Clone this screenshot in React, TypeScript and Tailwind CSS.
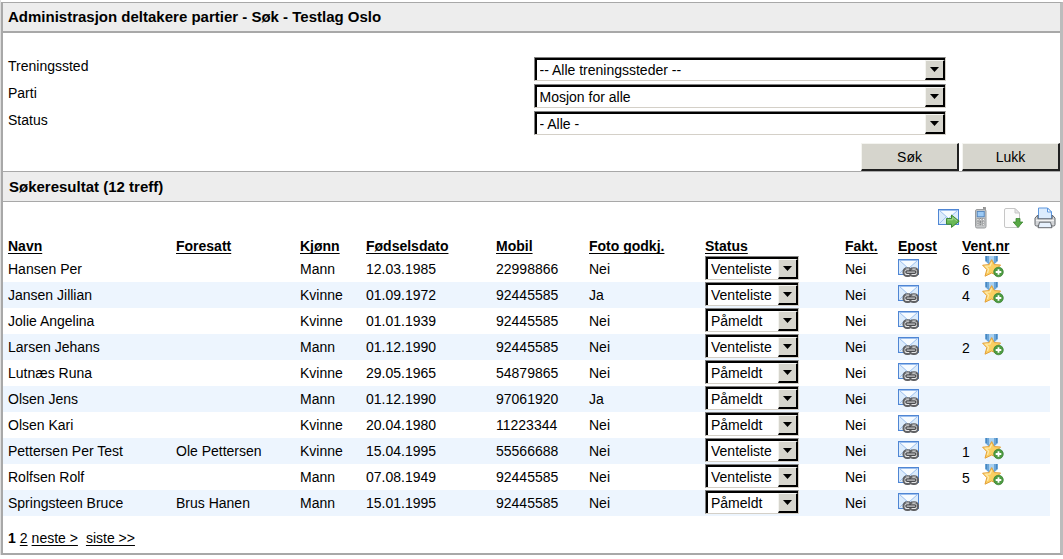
import { useId, type ReactNode } from 'react';

type Row = {
  navn: string;
  foresatt?: string;
  kjonn: string;
  fodt: string;
  mobil: string;
  foto: string;
  status: string;
  vent?: number;
};

const rows: Row[] = [
  { navn: 'Hansen Per', kjonn: 'Mann', fodt: '12.03.1985', mobil: '22998866', foto: 'Nei', status: 'Venteliste', vent: 6 },
  { navn: 'Jansen Jillian', kjonn: 'Kvinne', fodt: '01.09.1972', mobil: '92445585', foto: 'Ja', status: 'Venteliste', vent: 4 },
  { navn: 'Jolie Angelina', kjonn: 'Kvinne', fodt: '01.01.1939', mobil: '92445585', foto: 'Nei', status: 'Påmeldt' },
  { navn: 'Larsen Jehans', kjonn: 'Mann', fodt: '01.12.1990', mobil: '92445585', foto: 'Nei', status: 'Venteliste', vent: 2 },
  { navn: 'Lutnæs Runa', kjonn: 'Kvinne', fodt: '29.05.1965', mobil: '54879865', foto: 'Nei', status: 'Påmeldt' },
  { navn: 'Olsen Jens', kjonn: 'Mann', fodt: '01.12.1990', mobil: '97061920', foto: 'Ja', status: 'Påmeldt' },
  { navn: 'Olsen Kari', kjonn: 'Kvinne', fodt: '20.04.1980', mobil: '11223344', foto: 'Nei', status: 'Påmeldt' },
  { navn: 'Pettersen Per Test', foresatt: 'Ole Pettersen', kjonn: 'Kvinne', fodt: '15.04.1995', mobil: '55566688', foto: 'Nei', status: 'Venteliste', vent: 1 },
  { navn: 'Rolfsen Rolf', kjonn: 'Mann', fodt: '07.08.1949', mobil: '92445585', foto: 'Nei', status: 'Venteliste', vent: 5 },
  { navn: 'Springsteen Bruce', foresatt: 'Brus Hanen', kjonn: 'Mann', fodt: '15.01.1995', mobil: '92445585', foto: 'Nei', status: 'Påmeldt' },
];

const columns = [
  { label: 'Navn', width: 'w-[168px]' },
  { label: 'Foresatt', width: 'w-[124px]' },
  { label: 'Kjønn', width: 'w-[66px]' },
  { label: 'Fødselsdato', width: 'w-[130px]' },
  { label: 'Mobil', width: 'w-[93px]' },
  { label: 'Foto godkj.', width: 'w-[116px]' },
  { label: 'Status', width: 'w-[140px]' },
  { label: 'Fakt.', width: 'w-[53px]' },
  { label: 'Epost', width: 'w-[64px]' },
  { label: 'Vent.nr', width: 'w-[93px]' },
];

function Envelope() {
  return (
    <>
      <rect x="0.5" y="1.5" width="20" height="15" fill="#dcecfc" stroke="#4f86d4" />
      <path d="M1.5 15.5 L8 9 M19.5 15.5 L13 9" stroke="#a4c4ee" fill="none" />
      <path d="M1.5 2.5 H19.5 L10.5 10.5 Z" fill="#f6fbff" stroke="#9cbfee" strokeLinejoin="round" />
    </>
  );
}

function MailForwardIcon() {
  return (
    <svg width="22" height="20" viewBox="0 0 22 20" aria-hidden="true">
      <Envelope />
      <path d="M8.5 10.5 H13.5 V7 L21.2 13.2 L13.5 19.4 V16.2 H8.5 Z" fill="#6ab956" stroke="#3f8a34" strokeLinejoin="round" />
      <path d="M9.5 11.8 H14.7 V9.4 L18.8 12.8" fill="none" stroke="#a4d892" />
    </svg>
  );
}

function MailLinkIcon() {
  return (
    <svg width="21" height="20" viewBox="0 0 21 20" aria-hidden="true">
      <Envelope />
      <rect x="5.5" y="10.2" width="8.2" height="7.8" rx="3.6" fill="#e4e5e6" stroke="#606164" strokeWidth="2" />
      <rect x="11.8" y="10.2" width="8.2" height="7.8" rx="3.6" fill="#e4e5e6" stroke="#606164" strokeWidth="2" />
      <path d="M9 14.1 H16.8" stroke="#4a4b4e" strokeWidth="3.6" strokeLinecap="round" />
      <path d="M9.2 14.1 H16.6" stroke="#c9cacc" strokeWidth="1.3" strokeLinecap="round" />
      <path d="M7.8 10.4 H11.2 M14.4 10.4 H17.8" stroke="#a9aaad" strokeWidth="0.9" />
    </svg>
  );
}

function PhoneIcon() {
  return (
    <svg width="22" height="22" viewBox="-4 0 22 22" aria-hidden="true">
      <rect x="9.5" y="0.5" width="2" height="4" fill="#999" stroke="#777" strokeWidth="0.6" />
      <rect x="1.5" y="2.5" width="10.5" height="18.5" rx="1.5" fill="#c6c8ca" stroke="#9a9c9e" />
      <rect x="3.2" y="4.4" width="7" height="5.4" fill="#9ccaf5" stroke="#4d82bd" strokeWidth="0.9" />
      <g fill="#f8f8f8" stroke="#858789" strokeWidth="0.5">
        <rect x="3" y="11.7" width="1.9" height="1.7" /><rect x="5.8" y="11.7" width="1.9" height="1.7" /><rect x="8.6" y="11.7" width="1.9" height="1.7" />
        <rect x="3" y="14.3" width="1.9" height="1.7" /><rect x="5.8" y="14.3" width="1.9" height="1.7" /><rect x="8.6" y="14.3" width="1.9" height="1.7" />
        <rect x="3" y="16.9" width="1.9" height="1.7" /><rect x="5.8" y="16.9" width="1.9" height="1.7" /><rect x="8.6" y="16.9" width="1.9" height="1.7" />
      </g>
    </svg>
  );
}

function DownloadIcon() {
  return (
    <svg width="22" height="22" viewBox="0 0 22 22" aria-hidden="true">
      <path d="M2.5 3 Q2.5 1.5 4 1.5 H13 L17.5 6 V19 Q17.5 20.5 16 20.5 H4 Q2.5 20.5 2.5 19 Z" fill="#fcfcfc" stroke="#c6c6c6" />
      <path d="M13 1.5 V6 H17.5 Z" fill="#e6e6e6" stroke="#c6c6c6" />
      <path d="M14 11.5 H18 V15 H20.8 L16 20.5 L11.2 15 H14 Z" fill="#57a845" stroke="#3b8730" strokeWidth="0.8" strokeLinejoin="round" />
    </svg>
  );
}

function PrinterIcon() {
  return (
    <svg width="22" height="22" viewBox="0 0 22 22" aria-hidden="true">
      <path d="M4.5 12 V1 H13.5 L17.5 5 V12 Z" fill="#dcecfd" stroke="#5c96de" />
      <path d="M13.5 1 V5 H17.5 Z" fill="#fff" stroke="#5c96de" />
      <path d="M3.8 8 L1 11 V17.5 Q1 19 2.5 19 H19.5 Q21 19 21 17.5 V11 L18.2 8 V11.8 H3.8 Z" fill="#d3d5d8" stroke="#65686d" strokeLinejoin="round" />
      <path d="M2 13.4 H20" stroke="#f7f7f7" />
      <path d="M5.5 15.2 H16.5 L18 20.7 H4 Z" fill="#e7f1fd" stroke="#65686d" strokeLinejoin="round" />
    </svg>
  );
}

function MedalIcon() {
  return (
    <svg width="22" height="22" viewBox="0 0 22 22" aria-hidden="true">
      <path d="M3 0 H16 V5 L12.5 8 H6.5 L3 5 Z" fill="#6aa5d8" />
      <path d="M7 0 H12 V6.5 H7 Z" fill="#a8d0f0" />
      <path d="M4.5 0 V5 M14.5 0 V5" stroke="#4a86be" />
      <path d="M9.7 3.6 L12.3 8.6 L18.6 9 L14.3 13.6 L15.8 20 L9.7 17 L3 20.2 L4.8 13.6 L0.6 9.2 L7.1 8.6 Z" fill="#fbcf62" stroke="#e4a13a" strokeLinejoin="round" />
      <path d="M9.6 6.3 L8 10 L3.6 10.3 L6.6 13.2 L5.4 17" fill="none" stroke="#fee9a8" strokeWidth="1.3" />
      <circle cx="16.5" cy="16" r="4.8" fill="#4d9b42" stroke="#397f32" strokeWidth="0.7" />
      <path d="M16.5 13.2 V18.8 M13.7 16 H19.3" stroke="#fff" strokeWidth="1.8" />
    </svg>
  );
}

function Dropdown({ id, label, value, options }: { id?: string; label?: string; value: string; options: string[] }) {
  return (
    <div className="relative h-6 w-full border border-t-[#808080] border-l-[#808080] border-r-[#d4d0c8] border-b-[#d4d0c8]">
      <select
        id={id}
        aria-label={label}
        defaultValue={value}
        className="block h-full w-full appearance-none border-t-2 border-l-2 border-r border-black bg-white pr-5 pb-0.5 pl-[3px] text-sm leading-5 outline-none"
      >
        {options.map((o) => (
          <option key={o}>{o}</option>
        ))}
      </select>
      <span className="pointer-events-none absolute top-0.5 right-0 bottom-0 flex w-5 items-center justify-center border-t border-l border-r-2 border-b-2 border-t-[#f4f4f0] border-l-[#f4f4f0] border-r-black border-b-black bg-[#d6d5cd]">
        <svg width="9" height="5" viewBox="0 0 9 5" aria-hidden="true">
          <path d="M0 0 H9 L4.5 5 Z" fill="#000" />
        </svg>
      </span>
    </div>
  );
}

function Field({ label, value, options }: { label: string; value: string; options: string[] }) {
  const id = useId();
  return (
    <div className="grid grid-cols-2">
      <label htmlFor={id} className="pl-[5px] leading-[18px]">{label}</label>
      <div className="pl-0.5">
        <div className="w-[412px] max-w-full">
          <Dropdown id={id} value={value} options={options} />
        </div>
      </div>
    </div>
  );
}

function PushButton({ children }: { children: ReactNode }) {
  return (
    <button
      type="button"
      className="h-7 w-[98px] border-t border-l border-r-2 border-b-2 border-t-[#f4f4f0] border-l-[#f4f4f0] border-r-[#202020] border-b-[#202020] bg-[#d6d5cd] text-sm"
    >
      {children}
    </button>
  );
}

function IconButton({ label, children }: { label: string; children: ReactNode }) {
  return (
    <button type="button" aria-label={label} className="flex items-center justify-center">
      {children}
    </button>
  );
}

const linkStyle = 'underline underline-offset-2 [text-decoration-skip-ink:none]';

export default function App() {
  return (
    <div className="border-l border-[#dedede] bg-white pt-0.5 font-['Liberation_Sans',Arial,sans-serif] text-sm text-black">
      <main className="border-t border-r-[3px] border-b-2 border-l-2 border-[#a8a8a8] border-r-[#bcbcbc]">
        <h1 className="border-b-2 border-[#a8a8a8] bg-[#ededed] pl-[5px] text-[15px] leading-7 font-bold">
          Administrasjon deltakere partier - Søk - Testlag Oslo
        </h1>

        <form className="pt-6" onSubmit={(e) => e.preventDefault()}>
          <div className="flex flex-col gap-[3px]">
            <Field label="Treningssted" value="-- Alle treningssteder --" options={['-- Alle treningssteder --']} />
            <Field label="Parti" value="Mosjon for alle" options={['Mosjon for alle']} />
            <Field label="Status" value="- Alle -" options={['- Alle -', 'Venteliste', 'Påmeldt']} />
          </div>
          <div className="mt-2 flex justify-end gap-[3px]">
            <PushButton>Søk</PushButton>
            <PushButton>Lukk</PushButton>
          </div>
        </form>

        <h2 className="border-y border-[#a8a8a8] bg-[#ededed] pl-[6px] text-[15px] leading-[29px] font-bold">
          Søkeresultat (12 treff)
        </h2>

        <div className="flex items-center justify-end gap-2.5 pt-[5px] pr-1">
          <IconButton label="Send e-post"><MailForwardIcon /></IconButton>
          <IconButton label="Send SMS"><PhoneIcon /></IconButton>
          <IconButton label="Last ned"><DownloadIcon /></IconButton>
          <IconButton label="Skriv ut"><PrinterIcon /></IconButton>
        </div>

        <div className="pt-[7px] pr-2.5">
          <table className="w-full table-fixed border-collapse text-left">
            <thead>
              <tr>
                {columns.map((c) => (
                  <th key={c.label} className={`${c.width} h-5 px-[5px] py-0 leading-5`}>
                    <a href="#" className={linkStyle}>{c.label}</a>
                  </th>
                ))}
              </tr>
            </thead>
            <tbody>
              {rows.map((r) => (
                <tr key={r.navn} className="h-[26px] even:bg-[#edf5fe] [&>td]:px-[5px] [&>td]:py-0">
                  <td>{r.navn}</td>
                  <td>{r.foresatt}</td>
                  <td>{r.kjonn}</td>
                  <td>{r.fodt}</td>
                  <td>{r.mobil}</td>
                  <td>{r.foto}</td>
                  <td className="align-top">
                    <div className="w-[94px]">
                      <Dropdown label={`Status for ${r.navn}`} value={r.status} options={['Venteliste', 'Påmeldt']} />
                    </div>
                  </td>
                  <td>Nei</td>
                  <td className="align-top">
                    <div className="pt-0.5">
                      <IconButton label={`E-post til ${r.navn}`}><MailLinkIcon /></IconButton>
                    </div>
                  </td>
                  <td className="align-top">
                    {r.vent && (
                      <div className="flex items-end gap-3">
                        <span className="leading-4">{r.vent}</span>
                        <IconButton label={`Gi plass til ${r.navn}`}><MedalIcon /></IconButton>
                      </div>
                    )}
                  </td>
                </tr>
              ))}
            </tbody>
          </table>
        </div>

        <nav className="flex gap-1 pt-3 pb-[5px] pl-[5px] leading-5">
          <b>1</b>
          <a href="#" className={linkStyle}>2</a>
          <a href="#" className={linkStyle}>neste &gt;</a>
          <a href="#" className={`${linkStyle} ml-1`}>siste &gt;&gt;</a>
        </nav>
      </main>
    </div>
  );
}
